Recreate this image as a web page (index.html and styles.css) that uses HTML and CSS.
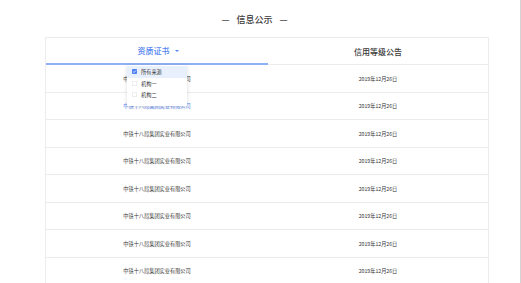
FILE: index.html
```html
<!DOCTYPE html>
<html lang="zh">
<head>
<meta charset="utf-8">
<link rel="stylesheet" href="styles.css">
</head>
<body>
<div class="page">
  <h1 class="title"><span class="dash">—</span>信息公示<span class="dash">—</span></h1>
  <div class="board">
    <div class="tabs">
      <div class="tab active">资质证书<i class="caret"></i></div>
      <div class="tab">信用等级公告</div>
    </div>
    <div class="row"><span class="cell">中铁十八局集团实业有限公司</span><span class="cell">2019年12月26日</span></div>
    <div class="row"><span class="cell link">中铁十八局集团实业有限公司</span><span class="cell">2019年12月26日</span></div>
    <div class="row"><span class="cell">中铁十八局集团实业有限公司</span><span class="cell">2019年12月26日</span></div>
    <div class="row"><span class="cell">中铁十八局集团实业有限公司</span><span class="cell">2019年12月26日</span></div>
    <div class="row"><span class="cell">中铁十八局集团实业有限公司</span><span class="cell">2019年12月26日</span></div>
    <div class="row"><span class="cell">中铁十八局集团实业有限公司</span><span class="cell">2019年12月26日</span></div>
    <div class="row"><span class="cell">中铁十八局集团实业有限公司</span><span class="cell">2019年12月26日</span></div>
    <div class="row"><span class="cell">中铁十八局集团实业有限公司</span><span class="cell">2019年12月26日</span></div>
    <ul class="menu">
      <li class="opt on"><svg class="box" viewBox="0 0 10 10"><rect x="0" y="0" width="10" height="10" rx="1.5" fill="#4f82f0"/><path d="M2.3 5.2 L4.3 7.1 L7.8 3" fill="none" stroke="#fff" stroke-width="1.4"/></svg>所有来源</li>
      <li class="opt"><svg class="box" viewBox="0 0 10 10"><rect x="0.5" y="0.5" width="9" height="9" rx="1.5" fill="#fff" stroke="#d2d2d2"/></svg>机构一</li>
      <li class="opt"><svg class="box" viewBox="0 0 10 10"><rect x="0.5" y="0.5" width="9" height="9" rx="1.5" fill="#fff" stroke="#d2d2d2"/></svg>机构二</li>
    </ul>
  </div>
</div>
</body>
</html>
```

FILE: styles.css
```css
* { box-sizing: border-box; margin: 0; padding: 0; }
html, body { background: #fff; }
body {
  font-family: "Noto Sans CJK SC", "Noto Sans", sans-serif;
  color: #333;
  overflow: hidden;
}
.page {
  width: 521px;
  height: 283px;
  border-right: 1px solid #d4d4d4;
  padding-top: 13px;
  overflow: hidden;
}
.title {
  font-size: 9px;
  line-height: 14px;
  font-weight: 500;
  color: #3a3a3a;
  text-align: center;
  padding-right: 11px;
}
.dash {
  display: inline-block;
  margin: 0 7px;
  color: #444;
}
.board {
  position: relative;
  margin: 10px 0 0 45px;
  width: 444px;
  border: 1px solid #ececec;
  border-bottom: none;
}
.tabs {
  display: flex;
  height: 27px;
  border-bottom: 1px solid #ececec;
}
.tab {
  flex: 1;
  display: flex;
  align-items: center;
  justify-content: center;
  font-size: 8px;
  font-weight: 500;
  color: #3a3a3a;
}
.tab.active {
  color: #5585f2;
  border-bottom: 2px solid #8fb0f5;
  margin-bottom: -1px;
  padding-left: 2px;
}
.caret {
  display: inline-block;
  margin-left: 5px;
  border-left: 2px solid transparent;
  border-right: 2px solid transparent;
  border-top: 2.5px solid #5585f2;
}
.row {
  display: flex;
  height: 27.5px;
  border-bottom: 1px solid #ececec;
  align-items: center;
}
.cell {
  flex: 1;
  text-align: center;
  font-size: 5.2px;
  color: #333;
}
.cell:first-child { padding-left: 1px; }
.cell:last-child { padding-left: 1px; }
.cell.link { color: #5585f2; }
.menu {
  position: absolute;
  left: 81px;
  top: 27px;
  width: 60px;
  padding: 1px 0 5px;
  list-style: none;
  background: #fff;
  box-shadow: 0 1px 4px rgba(0, 0, 0, 0.14);
  border-radius: 1px;
}
.opt {
  display: flex;
  align-items: center;
  height: 11.5px;
  padding-left: 5px;
  font-size: 5.2px;
  color: #333;
}
.opt.on { background: #e9f0fd; }
.box {
  width: 5px;
  height: 5px;
  margin-right: 4px;
  flex: none;
}
```
